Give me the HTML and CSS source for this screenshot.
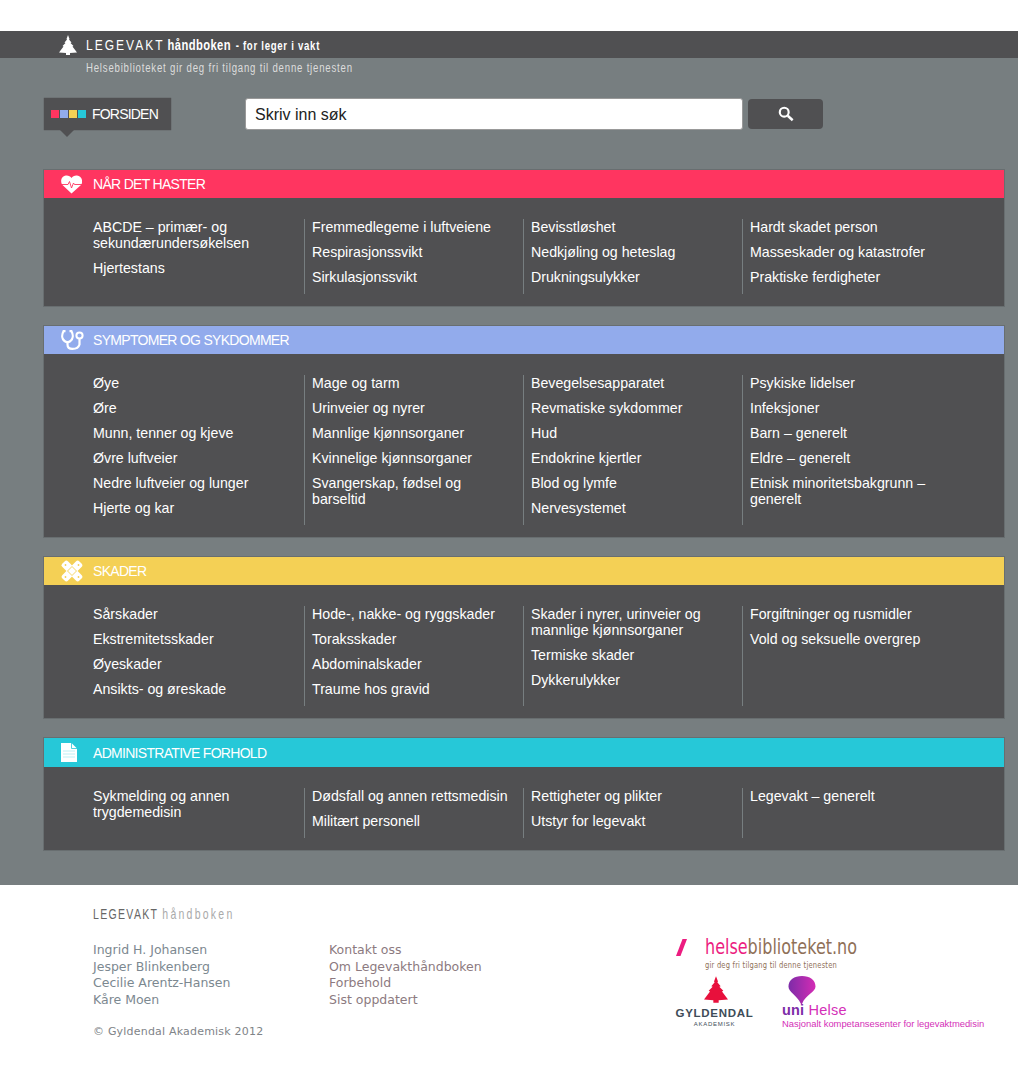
FILE: index.html
```html
<!DOCTYPE html>
<html lang="no">
    <head>
        <meta charset="utf-8">
        <title>Legevakthåndboken</title>
        <link rel="stylesheet" href="styles.css">
    </head>
    <body>
        <div id="topbar">
            <svg class="tree" width="18" height="20" viewBox="0 0 18 20"><path d="M9 0l1.500 4-.5.500 2.500 3-1 .500 3 3-1 .500L18 17.500l-7 .500v2H7v-2l-7-.500 4.500-6-1-.500 3-3-1-.500 2.500-3-.5-.500z" fill="#fff"/></svg>
            <div class="brandline">
                <span class="brand">LEGEVAKT</span>
                <span class="brand-b">håndboken</span>
                <span class="brand-c">- for leger i vakt</span>
            </div>
        </div>

        <div id="main">
            <p class="sub">Helsebiblioteket gir deg fri tilgang til denne tjenesten</p>

            <div id="searchrow">
                <a class="home" href="#">
                    <span class="sq sq-red"></span><span class="sq sq-blue"></span><span class="sq sq-yellow"></span><span class="sq sq-cyan"></span>
                    <span class="home-label">FORSIDEN</span>
                </a>
                <div class="searchbox">Skriv inn søk</div>
                <div class="searchbtn">
                    <svg width="16" height="16" viewBox="0 0 18 18"><circle cx="7" cy="7" r="5" fill="none" stroke="#fff" stroke-width="2.4"/><path d="M11 11l5.500 5" stroke="#fff" stroke-width="2.800"/></svg>
                </div>
            </div>

            <section class="panel">
                <h2 class="head head-red">
                    <span class="ico"><svg width="21" height="19" viewBox="0 0 21 19"><path d="M10.500 18.500L1.500 10C-1 7 0 1 5 0.500c2.500-.2 4.500 1 5.500 2.500 1-1.500 3-2.700 5.500-2.500 5 .5 6.500 6.500 4 9.500z" fill="#fff"/><path d="M0 9.500h7l1.500-3 2 6.500 2-5 1 1.500h7.500" fill="none" stroke="#ff3560" stroke-width=".9"/></svg></span>
                    NÅR DET HASTER
                </h2>
                <div class="cols">
                    <ul>
                        <li>ABCDE – primær- og sekundærundersøkelsen</li>
                        <li>Hjertestans</li>
                    </ul>
                    <ul>
                        <li>Fremmedlegeme i luftveiene</li>
                        <li>Respirasjonssvikt</li>
                        <li>Sirkulasjonssvikt</li>
                    </ul>
                    <ul>
                        <li>Bevisstløshet</li>
                        <li>Nedkjøling og heteslag</li>
                        <li>Drukningsulykker</li>
                    </ul>
                    <ul>
                        <li>Hardt skadet person</li>
                        <li>Masseskader og katastrofer</li>
                        <li>Praktiske ferdigheter</li>
                    </ul>
                </div>
            </section>

            <section class="panel">
                <h2 class="head head-blue">
                    <span class="ico"><svg width="23" height="20" viewBox="0 0 23 20"><path d="M4.500 1.200H2.500C.5 5 .8 9 3.500 11c2 1.500 4 1.500 6 0C12 9 12.500 5 10.500 1.200H8.500" fill="none" stroke="#fff" stroke-width="2.200"/><path d="M6.500 12v2.500c0 3 2 4.400 5 4.400s6-1 7-4.400V9" fill="none" stroke="#fff" stroke-width="2.200"/><circle cx="18.500" cy="5.500" r="3.100" fill="none" stroke="#fff" stroke-width="2"/></svg></span>
                    SYMPTOMER OG SYKDOMMER
                </h2>
                <div class="cols">
                    <ul>
                        <li>Øye</li>
                        <li>Øre</li>
                        <li>Munn, tenner og kjeve</li>
                        <li>Øvre luftveier</li>
                        <li>Nedre luftveier og lunger</li>
                        <li>Hjerte og kar</li>
                    </ul>
                    <ul>
                        <li>Mage og tarm</li>
                        <li>Urinveier og nyrer</li>
                        <li>Mannlige kjønnsorganer</li>
                        <li>Kvinnelige kjønnsorganer</li>
                        <li>Svangerskap, fødsel og barseltid</li>
                    </ul>
                    <ul>
                        <li>Bevegelsesapparatet</li>
                        <li>Revmatiske sykdommer</li>
                        <li>Hud</li>
                        <li>Endokrine kjertler</li>
                        <li>Blod og lymfe</li>
                        <li>Nervesystemet</li>
                    </ul>
                    <ul>
                        <li>Psykiske lidelser</li>
                        <li>Infeksjoner</li>
                        <li>Barn – generelt</li>
                        <li>Eldre – generelt</li>
                        <li>Etnisk minoritetsbakgrunn – generelt</li>
                    </ul>
                </div>
            </section>

            <section class="panel">
                <h2 class="head head-yellow">
                    <span class="ico"><svg width="22" height="24" viewBox="0 0 22 24"><g fill="#fff"><rect x="-1" y="8" width="24" height="8" rx="2.500" transform="rotate(45 11 12)"/><rect x="-1" y="8" width="24" height="8" rx="2.500" transform="rotate(-45 11 12)"/></g><g fill="#f4d055"><path d="M11 7.500l-4.500 4.500 4.500 4.500 4.500-4.500z" fill="none" stroke="#f4d055" stroke-width=".9"/><circle cx="4.500" cy="6" r=".9"/><circle cx="17.500" cy="6" r=".9"/><circle cx="4.500" cy="18" r=".9"/><circle cx="17.500" cy="18" r=".9"/></g></svg></span>
                    SKADER
                </h2>
                <div class="cols">
                    <ul>
                        <li>Sårskader</li>
                        <li>Ekstremitetsskader</li>
                        <li>Øyeskader</li>
                        <li>Ansikts- og øreskade</li>
                    </ul>
                    <ul>
                        <li>Hode-, nakke- og ryggskader</li>
                        <li>Toraksskader</li>
                        <li>Abdominalskader</li>
                        <li>Traume hos gravid</li>
                    </ul>
                    <ul>
                        <li>Skader i nyrer, urinveier og mannlige kjønnsorganer</li>
                        <li>Termiske skader</li>
                        <li>Dykkerulykker</li>
                    </ul>
                    <ul>
                        <li>Forgiftninger og rusmidler</li>
                        <li>Vold og seksuelle overgrep</li>
                    </ul>
                </div>
            </section>

            <section class="panel">
                <h2 class="head head-cyan">
                    <span class="ico"><svg width="16" height="19" viewBox="0 0 16 19"><path d="M0 0h10.500L16 5.500V19H0z" fill="#fff"/><path d="M10.500 0v5.500H16" fill="none" stroke="#26c8d8" stroke-width=".8"/><path d="M2 8h12M2 11h12M2 14h12" stroke="#bdf0f5" stroke-width="1"/></svg></span>
                    ADMINISTRATIVE FORHOLD
                </h2>
                <div class="cols">
                    <ul>
                        <li>Sykmelding og annen trygdemedisin</li>
                    </ul>
                    <ul>
                        <li>Dødsfall og annen rettsmedisin</li>
                        <li>Militært personell</li>
                    </ul>
                    <ul>
                        <li>Rettigheter og plikter</li>
                        <li>Utstyr for legevakt</li>
                    </ul>
                    <ul>
                        <li>Legevakt – generelt</li>
                    </ul>
                </div>
            </section>
        </div>

        <div id="footer">
            <div class="foot-left">
                <div class="foot-brand">LEGEVAKT <span>håndboken</span></div>
                <div class="foot-links">
                    <ul class="people">
                        <li>Ingrid H. Johansen</li>
                        <li>Jesper Blinkenberg</li>
                        <li>Cecilie Arentz-Hansen</li>
                        <li>Kåre Moen</li>
                    </ul>
                    <ul class="about">
                        <li>Kontakt oss</li>
                        <li>Om Legevakthåndboken</li>
                        <li>Forbehold</li>
                        <li>Sist oppdatert</li>
                    </ul>
                </div>
                <div class="copy">© Gyldendal Akademisk 2012</div>
            </div>

            <div class="foot-logos">
                <div class="hb">
                    <svg class="hb-mark" width="11" height="17" viewBox="0 0 11 17"><path d="M6.500 0H11L4.500 17H0z" fill="#ec1c80"/></svg>
                    <div>
                        <div class="hb-name"><span>helse</span>biblioteket.no</div>
                        <div class="hb-sub">gir deg fri tilgang til denne tjenesten</div>
                    </div>
                </div>
                <div class="logo-row">
                    <div class="gy">
                        <svg width="24" height="27" viewBox="0 0 18 20"><path d="M9 0l1.500 4-.5.500 2.500 3-1 .500 3 3-1 .500L18 17.500l-7 .500v2H7v-2l-7-.500 4.500-6-1-.500 3-3-1-.500 2.500-3-.5-.500z" fill="#e8103c"/></svg>
                        <div class="gy-name">GYLDENDAL</div>
                        <div class="gy-sub">AKADEMISK</div>
                    </div>
                    <div class="uni">
                        <svg width="28" height="28" viewBox="0 0 28 29"><defs><linearGradient id="balloon"><stop offset="0" stop-color="#7d2ca8"/><stop offset="1" stop-color="#d42cb4"/></linearGradient></defs><path d="M14 0C6 0 0 4 0 11c0 6 8 8 13 18h1c4-10 14-12 14-18C28 4 22 0 14 0z" fill="url(#balloon)"/></svg>
                        <div class="uni-name"><b>uni</b> Helse</div>
                        <div class="uni-sub">Nasjonalt kompetansesenter for legevaktmedisin</div>
                    </div>
                </div>
            </div>
        </div>
    </body>
</html>
```

FILE: styles.css
```css
body {
    margin: 0;
    padding-top: 31px;
    background: #FFF;
    font-family: "Liberation Sans", Arial, sans-serif;
    font-size: 14px;
}

ul {
    margin: 0;
    padding: 0;
    list-style: none;
}

#topbar {
    height: 27px;
    padding-left: 59px;
    display: flex;
    align-items: center;
    background: #505052;
    color: #FFF;
}

.tree {
    margin-right: 9px;
}

/* no narrow font here, the logo type is squeezed instead */
.brandline {
    white-space: nowrap;
    transform: scaleX(.8);
    transform-origin: left center;
}

.brand {
    font-size: 15px;
    letter-spacing: 2.5px;
}

.brand-b {
    font-size: 14px;
    font-weight: bold;
    letter-spacing: .5px;
}

.brand-c {
    margin-left: 2px;
    font-size: 12px;
    font-weight: bold;
    letter-spacing: .9px;
}

#main {
    height: 827px;
    box-sizing: border-box;
    padding: 0 14px 0 44px;
    background: #777E80;
    overflow: hidden;
}

.sub {
    margin: 3px 0 0 42px;
    color: #DDD;
    font-size: 12px;
    line-height: 14px;
    letter-spacing: 1px;
    white-space: nowrap;
    transform: scaleX(.8);
    transform-origin: left center;
}

#searchrow {
    display: flex;
    align-items: center;
    margin-top: 23px;
    height: 32px;
}

.home {
    position: relative;
    width: 127px;
    height: 32px;
    box-sizing: border-box;
    padding-left: 7px;
    display: flex;
    align-items: center;
    gap: 1px;
    background: #505052;
    box-shadow: 0 0 1px #444;
    color: #FFF;
    text-decoration: none;
}

.home:after {
    content: "";
    position: absolute;
    left: 16px;
    top: 32px;
    border: 7px solid transparent;
    border-top-color: #505052;
    border-bottom-width: 0;
}

.sq {
    width: 8px;
    height: 8px;
}

.sq-red { background: #FF3560; }
.sq-blue { background: #92ABEC; }
.sq-yellow { background: #F4D055; }
.sq-cyan { background: #26C8D8; }

.home-label {
    margin-left: 4px;
    padding-left: 1px;
    letter-spacing: -.8px;
}

.searchbox {
    width: 498px;
    height: 32px;
    margin-left: 74px;
    box-sizing: border-box;
    padding-left: 9px;
    background: #FFF;
    border: 1px solid #999;
    border-radius: 3px;
    font-size: 16px;
    line-height: 32px;
    color: #222;
}

.searchbtn {
    width: 75px;
    height: 30px;
    margin-left: 5px;
    display: flex;
    align-items: center;
    justify-content: center;
    background: #505052;
    border-radius: 4px;
}

.panel {
    margin-top: 20px;
    background: #505052;
    box-shadow: 0 0 0 1px #686E70;
}

#searchrow + .panel {
    margin-top: 40px;
}

.head {
    height: 28px;
    margin: 0;
    display: flex;
    align-items: center;
    color: #FFF;
    font-size: 14px;
    font-weight: normal;
    letter-spacing: -.7px;
}

.panel:last-child .head {
    height: 29px;
}

.head-red { background: #FF3560; }
.head-blue { background: #92ABEC; }
.head-yellow { background: #F4D055; }
.head-cyan { background: #26C8D8; }

.ico {
    width: 32px;
    margin-left: 17px;
    display: flex;
    align-items: center;
}

.cols {
    padding: 21px 0 12px 41px;
    display: flex;
}

.cols ul {
    width: 219px;
    box-sizing: border-box;
    padding: 0 10px 0 7px;
    border-left: 1px solid #777E80;
}

.cols ul:first-child {
    border-left-color: transparent;
}

.cols li {
    margin-bottom: 9px;
    color: #FFF;
    font-size: 14.2px;
    line-height: 16px;
}

#footer {
    height: 188px;
    box-sizing: border-box;
    display: flex;
    justify-content: space-between;
    padding: 21px 34px 0 93px;
    font-family: "DejaVu Sans", Verdana, sans-serif;
    font-size: 12.5px;
}

.foot-brand {
    color: #666;
    font-family: "Liberation Sans", sans-serif;
    font-size: 15px;
    line-height: 16px;
    letter-spacing: 1.9px;
    white-space: nowrap;
    transform: scaleX(.7);
    transform-origin: left center;
}

.foot-brand span {
    color: #AAA;
    letter-spacing: 3.2px;
}

.foot-links {
    margin-top: 20px;
    display: flex;
    line-height: 16.67px;
}

.people {
    width: 236px;
    color: #7C8890;
}

.about {
    color: #8C7A80;
}

.copy {
    margin-top: 16px;
    color: #808488;
    font-size: 11px;
    letter-spacing: .2px;
}

.foot-logos {
    width: 308px;
    padding-top: 29px;
}

.hb {
    display: flex;
    gap: 18px;
    align-items: flex-start;
}

.hb-mark {
    margin-top: 4px;
}

.hb-name {
    color: #8F7058;
    font-size: 21px;
    line-height: 24px;
    white-space: nowrap;
    transform: scaleX(.762);
    transform-origin: left center;
}

.hb-name span {
    color: #EC1C80;
}

.hb-sub {
    color: #8F7058;
    font-size: 9.5px;
    line-height: 11px;
    letter-spacing: .3px;
    white-space: nowrap;
    transform: scaleX(.708);
    transform-origin: left center;
}

.logo-row {
    margin-top: 6px;
    display: flex;
    gap: 29px;
}

.gy {
    width: 77px;
    display: flex;
    flex-direction: column;
    align-items: center;
    color: #3E4C58;
    font-family: "Liberation Sans", sans-serif;
}

.gy svg {
    margin-left: 2px;
}

.gy-name {
    margin-top: 3px;
    font-size: 11.5px;
    font-weight: bold;
    letter-spacing: .7px;
    line-height: 14px;
}

.gy-sub {
    margin-top: 1px;
    font-size: 6px;
    letter-spacing: .7px;
    line-height: 7px;
}

.uni {
    color: #D430B8;
    font-family: "Liberation Sans", sans-serif;
}

.uni svg {
    display: block;
    margin-left: 6px;
}

.uni-name {
    font-size: 14.5px;
    line-height: 13px;
    letter-spacing: .2px;
}

.uni-name b {
    color: #7D2CA8;
}

.uni-sub {
    margin-top: 1px;
    font-size: 9.4px;
    line-height: 11px;
    white-space: nowrap;
}
```
